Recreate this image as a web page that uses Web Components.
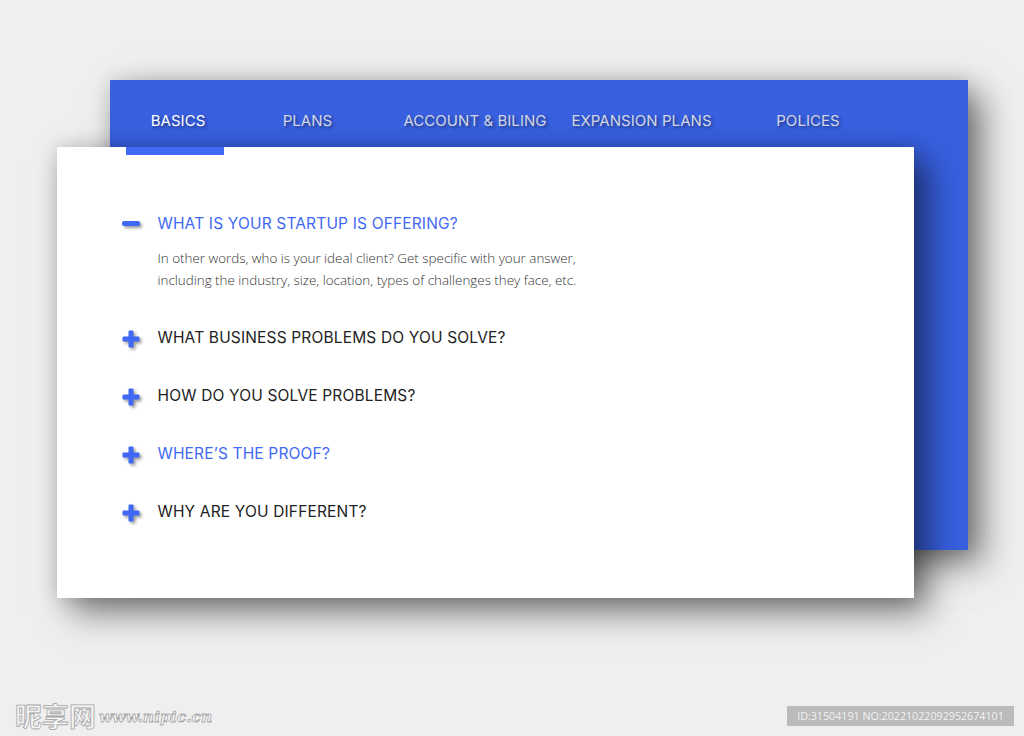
<!DOCTYPE html>
<html>
<head>
<meta charset="utf-8">
<title>FAQ</title>
<style>
    html, body { margin: 0; height: 100%; }
    body { background: #efefef; overflow: hidden; position: relative; }
</style>
</head>
<body>
<faq-stage>
    <tab-bar slot="tabs">
        <nav-tab active style="width:136px">BASICS</nav-tab>
        <nav-tab style="width:123px">PLANS</nav-tab>
        <nav-tab style="width:212px">ACCOUNT &amp; BILING</nav-tab>
        <nav-tab style="width:121px">EXPANSION PLANS</nav-tab>
        <nav-tab style="width:212px">POLICES</nav-tab>
    </tab-bar>
    <faq-item open accent label="WHAT IS YOUR STARTUP IS OFFERING?">In other words, who is your ideal client? Get specific with your answer,<br>including the industry, size, location, types of challenges they face, etc.</faq-item>
    <faq-item label="WHAT BUSINESS PROBLEMS DO YOU SOLVE?"></faq-item>
    <faq-item label="HOW DO YOU SOLVE PROBLEMS?"></faq-item>
    <faq-item accent label="WHERE’S THE PROOF?"></faq-item>
    <faq-item label="WHY ARE YOU DIFFERENT?"></faq-item>
</faq-stage>
<image-marks></image-marks>

<script>
const headingFont = 'Inter, "Liberation Sans", sans-serif';
const paperShadow = '14px 14px 32px rgba(0, 0, 0, 0.5), 0 0 18px rgba(0, 0, 0, 0.14)';

class FaqStage extends HTMLElement {
    connectedCallback() {
        this.attachShadow({ mode: 'open' });
        this.shadowRoot.innerHTML = `
            <style>
                :host {
                    display: grid;
                    width: 911px;
                    padding: 80px 0 0 57px;
                }
                .panel, .card { grid-area: 1 / 1; box-sizing: border-box; }
                .panel {
                    margin-left: 53px;
                    height: 470px;
                    background: #3860e0;
                    box-shadow: ${paperShadow};
                }
                .card {
                    margin: 67px 54px 0 0;
                    height: 451px;
                    padding: 67px 0 0 65px;
                    background: #fff;
                    box-shadow: ${paperShadow};
                }
            </style>
            <div class="panel"><slot name="tabs"></slot></div>
            <div class="card"><slot></slot></div>
        `;
    }
}

class TabBar extends HTMLElement {
    connectedCallback() {
        this.attachShadow({ mode: 'open' });
        this.shadowRoot.innerHTML = `
            <style>
                :host { display: flex; height: 67px; }
            </style>
            <slot></slot>
        `;
    }
}

class NavTab extends HTMLElement {
    connectedCallback() {
        this.attachShadow({ mode: 'open' });
        this.shadowRoot.innerHTML = `
            <style>
                :host {
                    display: flex;
                    flex: none;
                    box-sizing: border-box;
                    padding-top: 13px;
                    align-items: center;
                    justify-content: center;
                    position: relative;
                    font: 400 15px ${headingFont};
                    letter-spacing: 0.05px;
                    white-space: nowrap;
                    color: #d3d6e2;
                    text-shadow: 2px 2px 3px rgba(0, 0, 0, 0.4);
                }
                :host([active]) { color: #fff; }
                :host([active])::after {
                    content: '';
                    position: absolute;
                    left: 16px;
                    top: 67px;
                    width: 98px;
                    height: 8px;
                    background: #4169f5;
                }
            </style>
            <slot></slot>
        `;
    }
}

class FaqItem extends HTMLElement {
    connectedCallback() {
        const open = this.hasAttribute('open');
        const mark = open
            ? '<rect x="0" y="5" width="18" height="5" rx="2" />'
            : '<path d="M6.5 1.5a1 1 0 0 1 1-1h3a1 1 0 0 1 1 1v5h5a1 1 0 0 1 1 1v3a1 1 0 0 1-1 1h-5v5a1 1 0 0 1-1 1h-3a1 1 0 0 1-1-1v-5h-5a1 1 0 0 1-1-1v-3a1 1 0 0 1 1-1h5z" />';
        this.attachShadow({ mode: 'open' });
        this.shadowRoot.innerHTML = `
            <style>
                :host {
                    display: grid;
                    grid-template-columns: 35.5px 1fr;
                    grid-template-rows: 20px auto;
                    margin-bottom: 38px;
                }
                :host([open]) { margin-bottom: 36.5px; }
                svg {
                    width: 18px;
                    height: 18px;
                    fill: #3f69f5;
                    filter: drop-shadow(2px 2px 1.5px rgba(0, 0, 0, 0.4));
                    margin-top: 2px;
                }
                .label {
                    font: 400 15.5px/20px ${headingFont};
                    letter-spacing: 0.16px;
                    color: #222;
                    white-space: nowrap;
                }
                :host([accent]) .label { color: #3f69f5; }
                .body {
                    grid-column: 2;
                    margin-top: 13px;
                    font: 300 13.4px/22px "Open Sans", sans-serif;
                    color: #333;
                    white-space: nowrap;
                }
            </style>
            <svg viewBox="0 0 18 18">${mark}</svg>
            <div class="label">${this.getAttribute('label')}</div>
            ${open ? '<div class="body"><slot></slot></div>' : ''}
        `;
    }
}

class ImageMarks extends HTMLElement {
    connectedCallback() {
        this.attachShadow({ mode: 'open' });
        this.shadowRoot.innerHTML = `
            <style>
                :host {
                    position: absolute;
                    left: 0;
                    right: 0;
                    bottom: 0;
                    height: 40px;
                    display: flex;
                    justify-content: space-between;
                    align-items: center;
                    padding: 0 10px 0 15px;
                    box-sizing: border-box;
                }
                .logo {
                    display: flex;
                    align-items: center;
                    gap: 3px;
                    color: #f4f4f4;
                    -webkit-text-stroke: 0.8px #a8a8a8;
                }
                .logo b { font: 700 27px/30px "Noto Sans CJK SC", sans-serif; }
                .logo i { font: italic 700 15.5px "DejaVu Serif", serif; }
                .id {
                    width: 227px;
                    height: 20px;
                    background: #bbb;
                    color: #f2f2f2;
                    font: 400 10.7px/20px "Open Sans", sans-serif;
                    text-align: center;
                    white-space: nowrap;
                }
            </style>
            <div class="logo"><b>昵享网</b><i>www.nipic.cn</i></div>
            <div class="id">ID:31504191 NO:20221022092952674101</div>
        `;
    }
}

customElements.define('faq-stage', FaqStage);
customElements.define('tab-bar', TabBar);
customElements.define('nav-tab', NavTab);
customElements.define('faq-item', FaqItem);
customElements.define('image-marks', ImageMarks);
</script>
</body>
</html>
